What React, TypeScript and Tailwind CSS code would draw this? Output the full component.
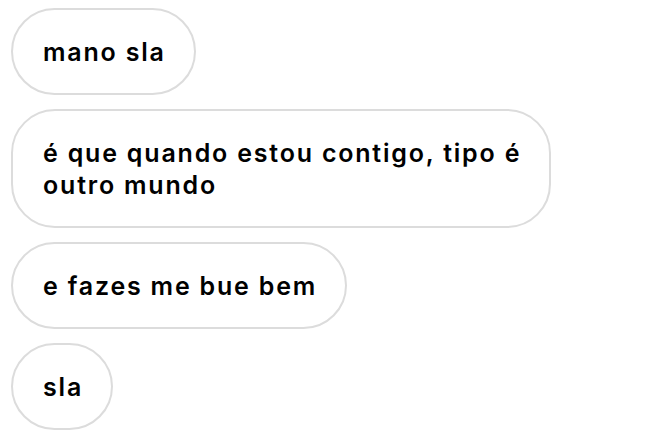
const messages: string[][] = [
  ['mano sla'],
  ['é que quando estou contigo, tipo é', 'outro mundo'],
  ['e fazes me bue bem'],
  ['sla'],
];

export default function App() {
  return (
    <div className="w-[649px] h-[435px] bg-white pt-[8px] pl-[11px] flex flex-col items-start gap-[14px] font-['Inter',sans-serif]">
      {messages.map((lines) => (
        <div
          key={lines[0]}
          className="border-2 border-[#dcdcdc] rounded-[44px] pl-[30px] pr-[28px] py-[25.5px] text-[25px] leading-[32px] font-semibold text-black tracking-[1.8px]"
        >
          {lines.map((l) => (
            <span key={l} className="block whitespace-nowrap">
              {l}
            </span>
          ))}
        </div>
      ))}
    </div>
  );
}
